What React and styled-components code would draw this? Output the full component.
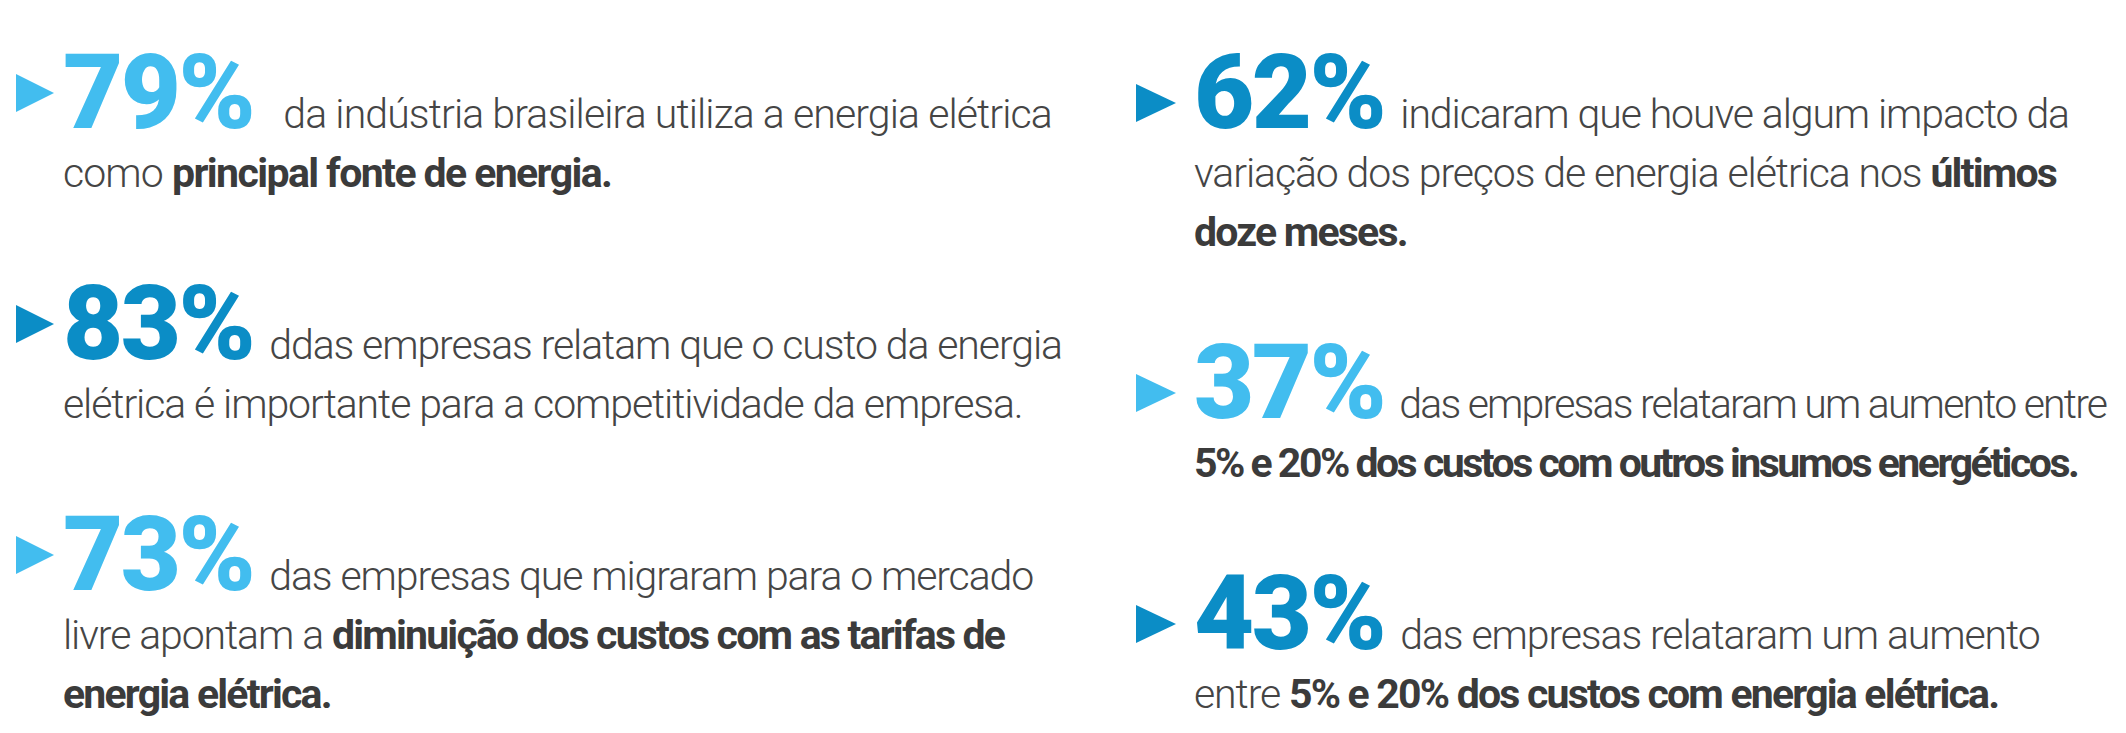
import React from 'react';
import styled, { createGlobalStyle } from 'styled-components';

const GlobalStyle = createGlobalStyle`
  html, body {
    margin: 0;
    padding: 0;
    background: #ffffff;
  }
  body {
    font-family: Roboto, "Liberation Sans", sans-serif;
  }
`;

const BLUE = {
  light: '#42bdef',
  dark: '#0b8dc6',
};

const Page = styled.main`
  display: grid;
  grid-template-columns: 1120px 1fr;
  width: 2126px;
  height: 733px;
  overflow: hidden;
  background: #ffffff;
`;

const Column = styled.section`
  display: flex;
  flex-direction: column;
  gap: 113px;
  padding-top: 85px;
  padding-left: 16px;
`;

const Stat = styled.div`
  display: flex;
  align-items: flex-start;
  gap: ${p => p.$gap}px;
`;

const Marker = styled.span`
  flex: none;
  width: 0;
  height: 0;
  border-top: 19px solid transparent;
  border-bottom: 19px solid transparent;
  border-left: ${p => p.$size}px solid ${p => p.$color};
  margin-top: ${p => p.$drop}px;
`;

// --track lets a long line be set a little tighter
const Text = styled.p`
  --track: ${p => p.$track}px;
  margin: 0;
  font-family: Roboto, "Liberation Sans", sans-serif;
  font-weight: 300;
  font-size: 41px;
  line-height: 59px;
  letter-spacing: var(--track);
  color: #454545;
  white-space: nowrap;
`;

const Figure = styled.span`
  font-family: Roboto, "Liberation Sans", sans-serif;
  font-weight: 900;
  font-size: 104px;
  line-height: 0;
  letter-spacing: -2.5px;
  color: ${p => p.$color};
  margin-right: ${p => p.$space}px;
`;

const Strong = styled.strong`
  font-weight: 700;
  letter-spacing: calc(var(--track) - 0.7px);
  color: #3b3b3b;
`;

const left = [
  {
    value: '79%',
    color: BLUE.light,
    space: 30,
    track: -0.9,
    body: (
      <>
        da indústria brasileira utiliza a energia elétrica
        <br />
        como <Strong>principal fonte de energia.</Strong>
      </>
    ),
  },
  {
    value: '83%',
    color: BLUE.dark,
    space: 16,
    track: -1.1,
    body: (
      <>
        ddas empresas relatam que o custo da energia
        <br />
        elétrica é importante para a competitividade da empresa.
      </>
    ),
  },
  {
    value: '73%',
    color: BLUE.light,
    space: 16,
    track: -1.1,
    body: (
      <>
        das empresas que migraram para o mercado
        <br />
        livre apontam a <Strong>diminuição dos custos com as tarifas de</Strong>
        <br />
        <Strong>energia elétrica.</Strong>
      </>
    ),
  },
];

const right = [
  {
    value: '62%',
    color: BLUE.dark,
    space: 16,
    track: -1.1,
    body: (
      <>
        indicaram que houve algum impacto da
        <br />
        variação dos preços de energia elétrica nos <Strong>últimos</Strong>
        <br />
        <Strong>doze meses.</Strong>
      </>
    ),
  },
  {
    value: '37%',
    color: BLUE.light,
    space: 15,
    track: -1.8,
    body: (
      <>
        das empresas relataram um aumento entre
        <br />
        <Strong>5% e 20% dos custos com outros insumos energéticos.</Strong>
      </>
    ),
  },
  {
    value: '43%',
    color: BLUE.dark,
    space: 16,
    track: -1.1,
    body: (
      <>
        das empresas relataram um aumento
        <br />
        entre <Strong>5% e 20% dos custos com energia elétrica.</Strong>
      </>
    ),
  },
];

function StatList({ items, gap, marker, drop }) {
  return (
    <Column>
      {items.map(item => (
        <Stat key={item.value} $gap={gap}>
          <Marker $size={marker} $color={item.color} $drop={drop} />
          <Text $track={item.track}>
            <Figure $color={item.color} $space={item.space}>{item.value}</Figure>
            {item.body}
          </Text>
        </Stat>
      ))}
    </Column>
  );
}

export default function App() {
  return (
    <>
      <GlobalStyle />
      <Page>
        <StatList items={left} gap={9} marker={38} drop={-11} />
        <StatList items={right} gap={18} marker={40} drop={-1} />
      </Page>
    </>
  );
}
